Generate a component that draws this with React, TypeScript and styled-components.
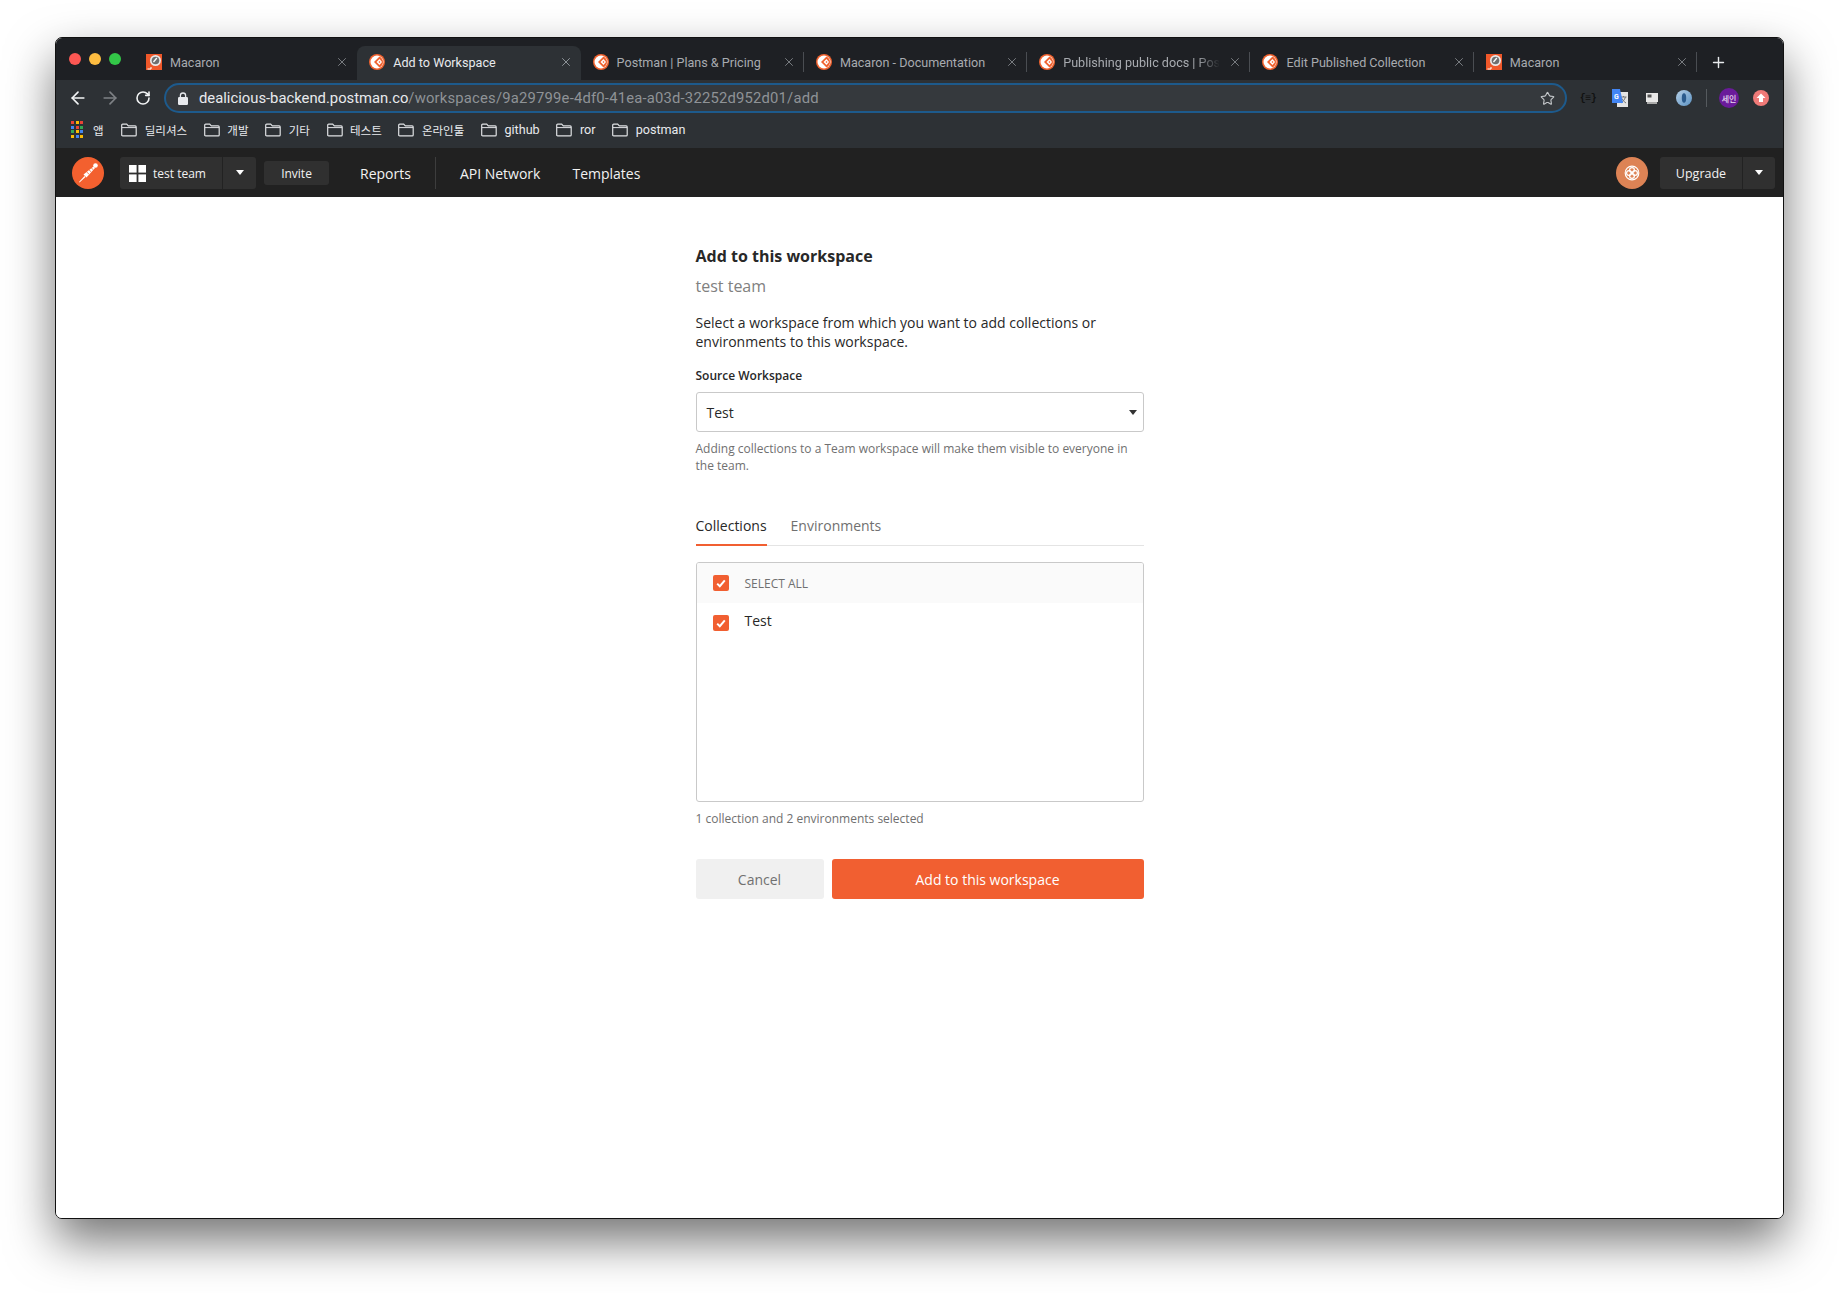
import * as React from "react";
import styled, { createGlobalStyle } from "styled-components";
import { ArrowLeft, ArrowRight, Plus, RotateCw, Star, X } from "lucide-react";

const GlobalStyle = createGlobalStyle`
  html, body {
    margin: 0;
    padding: 0;
    background: #fff;
  }
  * {
    box-sizing: border-box;
  }
`;

const tabs = [
  { title: "Macaron", icon: "square" },
  { title: "Add to Workspace", icon: "round", active: true },
  { title: "Postman | Plans & Pricing", icon: "round", divider: true },
  { title: "Macaron - Documentation", icon: "round", divider: true },
  { title: "Publishing public docs | Postman", icon: "round", divider: true, fade: true },
  { title: "Edit Published Collection", icon: "round", divider: true },
  { title: "Macaron", icon: "square", divider: true },
];

const bookmarks = [
  { name: "딜리셔스" },
  { name: "개발" },
  { name: "기타" },
  { name: "테스트" },
  { name: "온라인툴" },
  { name: "github", latin: true },
  { name: "ror", latin: true },
  { name: "postman", latin: true },
];

const appColors = [
  "#ea4335", "#fbbc04", "#ea4335",
  "#4285f4", "#ea4335", "#34a853",
  "#34a853", "#fbbc04", "#4285f4",
  "#fbbc04", "#4285f4", "#fbbc04",
];

function TabIcon({ kind }: { kind: string }) {
  if (kind === "square") {
    return (
      <svg width="16" height="16" viewBox="0 0 16 16">
        <rect width="16" height="16" fill="#f0582a" />
        <circle cx="9.500" cy="6.500" r="5.500" fill="#e8e8e8" />
        <circle cx="9.500" cy="6.500" r="3.800" fill="#6f6f6f" />
        <path d="M7.500 8 10.800 4" stroke="#fff" strokeWidth="1.300" />
        <path d="M1.500 15h3.500v-2" stroke="#fff" fill="none" />
      </svg>
    );
  }
  return (
    <svg width="16" height="16" viewBox="0 0 16 16">
      <circle cx="8" cy="8" r="8" fill="#f0622f" />
      <circle cx="8" cy="8" r="6.500" fill="#fff" />
      <path d="M10.500 2.500 5 8l5.500 5.500c2-1 3.500-3 3.500-5.500s-1.500-4.500-3.500-5.500Z" fill="#f0622f" />
      <path d="M10.500 5 7.500 8l3 3L13 8Z" fill="#fff" />
      <path d="M10.500 7 9.500 8l1 1 1-1Z" fill="#f0622f" />
    </svg>
  );
}

function FolderIcon() {
  return (
    <svg width="16" height="14" viewBox="0 0 16 14" fill="none">
      <path
        d="M.7 2.200c0-.6.4-1 1-1h4l1.600 1.700h6.900c.6 0 1 .4 1 1v8c0 .6-.4 1-1 1H1.700c-.6 0-1-.4-1-1Z"
        stroke="#dfe1e4"
        strokeWidth="1.200"
      />
      <path d="M1 4.600h14" stroke="#dfe1e4" strokeWidth="1" />
    </svg>
  );
}

function LockIcon() {
  return (
    <svg width="10" height="13" viewBox="0 0 10 13">
      <path d="M2.400 5.500V3.600a2.600 2.600 0 0 1 5.200 0v1.900" fill="none" stroke="#e8eaed" strokeWidth="1.300" />
      <rect y="5" width="10" height="8" rx="1.200" fill="#e8eaed" />
    </svg>
  );
}

function PostmanLogo() {
  return (
    <svg width="32" height="32" viewBox="0 0 32 32">
      <circle cx="16" cy="16" r="16" fill="#f3602f" />
      <circle cx="23.500" cy="8.500" r="2.300" fill="#fff" />
      <path d="M21.500 9.500 23 11 14.500 20.500 11.500 17.500Z" fill="#fff" />
      <path d="M14.500 14.800 17 17.200M16.800 12.600l2.500 2.400M19 10.600l2.300 2.200" stroke="#f3602f" strokeWidth=".8" />
      <path d="M12.500 19 13.500 20 7.500 25.500 7 25Z" fill="#fff" />
    </svg>
  );
}

function GridIcon() {
  return (
    <svg width="17" height="17" viewBox="0 0 17 17" fill="#fff">
      <rect width="7.600" height="7.600" />
      <rect x="9.400" width="7.600" height="7.600" />
      <rect y="9.400" width="7.600" height="7.600" />
      <rect x="9.400" y="9.400" width="7.600" height="7.600" />
    </svg>
  );
}

function Caret({ color }: { color: string }) {
  return (
    <svg width="8" height="5" viewBox="0 0 8 5">
      <path d="M0 0h8L4 5Z" fill={color} />
    </svg>
  );
}

function Check() {
  return (
    <CheckBox>
      <svg width="10" height="9" viewBox="0 0 10 9" fill="none">
        <path d="M1.200 4.600 3.800 7.200 8.800 1.400" stroke="#fff" strokeWidth="2" />
      </svg>
    </CheckBox>
  );
}

function TranslateIcon() {
  return (
    <svg width="16" height="18" viewBox="0 0 16 18">
      <rect x="5" y="3" width="11" height="15" fill="#e4e4e4" />
      <path d="M8.500 8h6M11.500 7v1M13.500 8c-1 3-3 5-4.500 6M10 9.500c.8 2 2.500 3.500 4 4.500" stroke="#777" fill="none" />
      <path d="M0 0h8l3 14H0Z" fill="#4285f4" />
      <text x="2" y="9.500" fontSize="7" fill="#fff" fontFamily="Roboto, sans-serif" fontWeight="700">
        G
      </text>
    </svg>
  );
}

function ScreenIcon() {
  return (
    <svg width="12" height="11" viewBox="0 0 12 11">
      <rect width="12" height="9" fill="#e8e8e8" />
      <rect x="1.500" y="1.500" width="4" height="3" fill="#555" />
      <rect x="1" y="9" width="10" height="2" fill="#aaa" />
    </svg>
  );
}

function RingIcon() {
  return (
    <svg width="16" height="16" viewBox="0 0 16 16" fill="none">
      <defs>
        <linearGradient id="ring" x1="0" y1="0" x2="1" y2="1">
          <stop offset="0" stopColor="#b5cfe6" />
          <stop offset="1" stopColor="#5c93c4" />
        </linearGradient>
      </defs>
      <circle cx="8" cy="8" r="8" fill="url(#ring)" />
      <ellipse cx="8" cy="8" rx="2.200" ry="4.800" fill="#2a5a8c" />
    </svg>
  );
}

function UploadIcon() {
  return (
    <svg width="16" height="16" viewBox="0 0 16 16">
      <circle cx="8" cy="8" r="8" fill="#ef7a78" />
      <path d="M8 3.500 12.500 8H10v4H6V8H3.500Z" fill="#fff" />
    </svg>
  );
}

function WheelIcon() {
  return (
    <svg width="16" height="16" viewBox="0 0 16 16" fill="none" stroke="#fff" strokeWidth="1.200">
      <circle cx="8" cy="8" r="6.800" />
      <circle cx="8" cy="5" r="2.400" />
      <circle cx="8" cy="11" r="2.400" />
      <circle cx="5" cy="8" r="2.400" />
      <circle cx="11" cy="8" r="2.400" />
    </svg>
  );
}

export default function App() {
  return (
    <>
      <GlobalStyle />
      <Page>
        <BrowserWindow>
          <TabStrip>
            <Lights>
              <Light $color="#fc5753" />
              <Light $color="#fdbc40" />
              <Light $color="#33c748" />
            </Lights>
            {tabs.map((tab, i) => (
              <Tab key={i} $active={tab.active} $divider={tab.divider}>
                <TabIcon kind={tab.icon} />
                <TabTitle $active={tab.active} $fade={tab.fade}>
                  {tab.title}
                </TabTitle>
                <TabClose $active={tab.active}>
                  <X size={14} strokeWidth={1.500} />
                </TabClose>
              </Tab>
            ))}
            <NewTab>
              <Plus size={17} strokeWidth={2} />
            </NewTab>
          </TabStrip>

          <Toolbar>
            <NavButton $dim={false}>
              <ArrowLeft size={20} strokeWidth={2} />
            </NavButton>
            <NavButton $dim>
              <ArrowRight size={20} strokeWidth={2} />
            </NavButton>
            <NavButton $dim={false}>
              <RotateCw size={16} strokeWidth={2.400} />
            </NavButton>
            <Omnibox>
              <LockIcon />
              <Url>
                <UrlHost>dealicious-backend.postman.co</UrlHost>
                /workspaces/9a29799e-4df0-41ea-a03d-32252d952d01/add
              </Url>
              <Star size={15} strokeWidth={1.800} color="#c4c7ca" />
            </Omnibox>
            <Extensions>
              <ExtensionBraces>{"{≡}"}</ExtensionBraces>
              <ExtensionSlot>
                <TranslateIcon />
              </ExtensionSlot>
              <ExtensionSlot>
                <ScreenIcon />
              </ExtensionSlot>
              <ExtensionSlot>
                <RingIcon />
              </ExtensionSlot>
              <ToolbarDivider />
              <ExtensionSlot>
                <ProfileBadge>세인</ProfileBadge>
              </ExtensionSlot>
              <ExtensionSlot>
                <UploadIcon />
              </ExtensionSlot>
            </Extensions>
          </Toolbar>

          <BookmarkBar>
            <AppsItem>
              <AppsGrid>
                {appColors.map((c, i) => (
                  <AppDot key={i} $color={c} />
                ))}
              </AppsGrid>
              <BookmarkName>앱</BookmarkName>
            </AppsItem>
            {bookmarks.map((b) => (
              <Bookmark key={b.name}>
                <FolderIcon />
                <BookmarkName $latin={b.latin}>{b.name}</BookmarkName>
              </Bookmark>
            ))}
          </BookmarkBar>

          <AppBar>
            <PostmanLogo />
            <TeamButton>
              <TeamName>
                <GridIcon />
                test team
              </TeamName>
              <TeamCaret>
                <Caret color="#fff" />
              </TeamCaret>
            </TeamButton>
            <InviteButton>Invite</InviteButton>
            <AppLink>Reports</AppLink>
            <AppDivider />
            <AppLink>API Network</AppLink>
            <AppLink>Templates</AppLink>
            <AppBarRight>
              <UserAvatar>
                <WheelIcon />
              </UserAvatar>
              <UpgradeButton>
                <UpgradeLabel>Upgrade</UpgradeLabel>
                <UpgradeCaret>
                  <Caret color="#fff" />
                </UpgradeCaret>
              </UpgradeButton>
            </AppBarRight>
          </AppBar>

          <Body>
            <Form>
              <Title>Add to this workspace</Title>
              <TeamLabel>test team</TeamLabel>
              <Description>
                Select a workspace from which you want to add collections or environments to this
                workspace.
              </Description>
              <FieldLabel>Source Workspace</FieldLabel>
              <SelectBox>
                Test
                <Caret color="#333" />
              </SelectBox>
              <HelpText>
                Adding collections to a Team workspace will make them visible to everyone in the
                team.
              </HelpText>
              <TabRow>
                <FormTab $active>Collections</FormTab>
                <FormTab>Environments</FormTab>
              </TabRow>
              <ListBox>
                <SelectAllRow>
                  <Check />
                  SELECT ALL
                </SelectAllRow>
                <ListRow>
                  <Check />
                  <ListRowLabel>Test</ListRowLabel>
                </ListRow>
              </ListBox>
              <SelectionCount>1 collection and 2 environments selected</SelectionCount>
              <Actions>
                <CancelButton>Cancel</CancelButton>
                <SubmitButton>Add to this workspace</SubmitButton>
              </Actions>
            </Form>
          </Body>
        </BrowserWindow>
      </Page>
    </>
  );
}

const Page = styled.div`
  width: 1839px;
  height: 1293px;
  padding: 37px 55px 74px 55px;
  background: #fff;
  overflow: hidden;
`;

const BrowserWindow = styled.div`
  display: flex;
  flex-direction: column;
  height: 100%;
  border: 1px solid #111;
  border-radius: 7px;
  overflow: hidden;
  background: #fff;
  box-shadow: 0 22px 48px 0 rgba(0, 0, 0, 0.55);
`;

const TabStrip = styled.div`
  display: flex;
  align-items: flex-end;
  height: 42px;
  flex-shrink: 0;
  background: #1e2024;
`;

const Lights = styled.div`
  display: flex;
  align-self: flex-start;
  gap: 8px;
  width: 78px;
  padding: 15px 0 0 13px;
`;

const Light = styled.span<{ $color: string }>`
  width: 12px;
  height: 12px;
  border-radius: 50%;
  background: ${(p) => p.$color};
`;

const Tab = styled.div<{ $active?: boolean; $divider?: boolean }>`
  position: relative;
  display: flex;
  align-items: center;
  width: 223.300px;
  height: 34px;
  padding: 0 8px 2px 12px;
  border-radius: 8px 8px 0 0;
  background: ${(p) => (p.$active ? "#2d3135" : "transparent")};

  ${(p) =>
    p.$divider &&
    `
    &::after {
      content: "";
      position: absolute;
      right: 0;
      top: 6px;
      height: 20px;
      width: 1px;
      background: #4a4d52;
    }
  `}
`;

const TabTitle = styled.span<{ $active?: boolean; $fade?: boolean }>`
  flex: 1;
  min-width: 0;
  margin-left: 8px;
  overflow: hidden;
  white-space: nowrap;
  font: 400 12.600px Roboto, sans-serif;
  color: ${(p) => (p.$active ? "#e8eaed" : "#a8abb0")};
  ${(p) =>
    p.$fade &&
    `
    -webkit-mask-image: linear-gradient(90deg, #000 85%, transparent 100%);
    mask-image: linear-gradient(90deg, #000 85%, transparent 100%);
  `}
`;

const TabClose = styled.span<{ $active?: boolean }>`
  display: flex;
  margin-left: 8px;
  color: ${(p) => (p.$active ? "#9aa0a6" : "#85888d")};
`;

const NewTab = styled.span`
  display: flex;
  align-items: center;
  height: 34px;
  margin-left: 13px;
  padding-bottom: 2px;
  color: #e8eaed;
`;

const Toolbar = styled.div`
  display: flex;
  align-items: center;
  height: 36px;
  flex-shrink: 0;
  padding: 0 6px 0 5.500px;
  background: #2d3135;
`;

const NavButton = styled.span<{ $dim: boolean }>`
  display: flex;
  flex: none;
  justify-content: center;
  width: 32.500px;
  color: ${(p) => (p.$dim ? "#7e8185" : "#f1f3f4")};
`;

const Omnibox = styled.div`
  display: flex;
  align-items: center;
  flex: none;
  width: 1403px;
  height: 30px;
  margin-left: 5px;
  padding: 0 10px 0 12px;
  border: 2px solid #1d5a8c;
  border-radius: 15px;
  background: #35393d;
`;

const Url = styled.span`
  flex: 1;
  margin-left: 11px;
  white-space: nowrap;
  font: 400 14.800px Roboto, sans-serif;
  letter-spacing: 0.200px;
  color: #8f9397;
`;

const UrlHost = styled.span`
  color: #e8eaed;
  letter-spacing: 0;
`;

const Extensions = styled.div`
  display: flex;
  flex: none;
  align-items: center;
  margin-left: 5px;
`;

const ExtensionSlot = styled.span`
  display: flex;
  flex: none;
  align-items: center;
  justify-content: center;
  width: 32px;
`;

const ExtensionBraces = styled(ExtensionSlot)`
  font: 700 10px "Liberation Mono", monospace;
  color: #111;
  letter-spacing: -0.500px;
`;

const ToolbarDivider = styled.span`
  width: 1px;
  height: 18px;
  margin: 0 6px 0 6px;
  background: #555a5e;
`;

const ProfileBadge = styled.span`
  display: flex;
  align-items: center;
  justify-content: center;
  width: 20px;
  height: 20px;
  border-radius: 50%;
  background: #6a1b9a;
  color: #e6d7ee;
  font: 500 8px "Noto Sans CJK KR", sans-serif;
`;

const BookmarkBar = styled.div`
  display: flex;
  align-items: center;
  gap: 16.700px;
  height: 32px;
  flex-shrink: 0;
  padding: 0 0 5px 15px;
  background: #2d3135;
  color: #e8eaed;
`;

const Bookmark = styled.span`
  display: flex;
  align-items: center;
  gap: 7.500px;
`;

const BookmarkName = styled.span<{ $latin?: boolean }>`
  font: 400 ${(p) => (p.$latin ? "12.600px" : "11.500px")} Roboto, "Noto Sans CJK KR", sans-serif;
`;

const AppsItem = styled(Bookmark)`
  gap: 10px;
  margin-right: 1px;
`;

const AppsGrid = styled.span`
  display: grid;
  grid-template-columns: repeat(3, 3px);
  grid-auto-rows: 3px;
  gap: 1.500px;
`;

const AppDot = styled.i<{ $color: string }>`
  background: ${(p) => p.$color};
`;

const AppBar = styled.div`
  display: flex;
  align-items: center;
  height: 49px;
  flex-shrink: 0;
  padding: 0 8px 0 16px;
  background: #212121;
  font-family: "Open Sans", sans-serif;
`;

const TeamButton = styled.div`
  display: flex;
  height: 32px;
  margin-left: 16px;
  border-radius: 3px;
  background: #303030;
  color: #f2f2f2;
  font-size: 12px;
`;

const TeamName = styled.div`
  display: flex;
  align-items: center;
  gap: 7px;
  width: 103px;
  padding: 1px 0 0 9px;
  border-right: 1px solid #222;
`;

const TeamCaret = styled.div`
  display: flex;
  align-items: center;
  justify-content: center;
  width: 33px;
`;

const InviteButton = styled.div`
  display: flex;
  align-items: center;
  justify-content: center;
  width: 65px;
  height: 24px;
  margin-left: 8px;
  padding-top: 1px;
  border-radius: 3px;
  background: #303030;
  color: #f2f2f2;
  font-size: 12px;
`;

const AppLink = styled.span`
  margin-left: 31px;
  padding-top: 1px;
  color: #f2f2f2;
  font-size: 14px;
  font-weight: 500;
  white-space: nowrap;

  & + & {
    margin-left: 32px;
  }
`;

const AppDivider = styled.span`
  width: 1px;
  height: 32px;
  margin: 0 -7px 0 24px;
  background: #3d3d3d;
`;

const AppBarRight = styled.div`
  display: flex;
  align-items: center;
  margin-left: auto;
`;

const UserAvatar = styled.div`
  display: flex;
  align-items: center;
  justify-content: center;
  width: 32px;
  height: 32px;
  border-radius: 50%;
  background: #dd8355;
`;

const UpgradeButton = styled.div`
  display: flex;
  height: 32px;
  margin-left: 12px;
  border-radius: 3px;
  background: #303030;
  color: #f2f2f2;
  font-size: 12.500px;
  font-weight: 500;
`;

const UpgradeLabel = styled.div`
  display: flex;
  align-items: center;
  justify-content: center;
  width: 83px;
  padding-top: 1px;
  border-right: 1px solid #222;
`;

const UpgradeCaret = styled.div`
  display: flex;
  align-items: center;
  justify-content: center;
  width: 32px;
`;

const Body = styled.div`
  flex: 1;
  display: flex;
  justify-content: center;
  padding-top: 47px;
  background: #fff;
`;

const Form = styled.div`
  width: 448px;
  font-family: "Open Sans", sans-serif;
`;

const Title = styled.h1`
  margin: 0;
  font-size: 16px;
  line-height: 24px;
  font-weight: 700;
  color: #282828;
`;

const TeamLabel = styled.div`
  margin-top: 6px;
  font-size: 16px;
  line-height: 24px;
  color: #808080;
`;

const Description = styled.p`
  margin: 15px 0 0;
  font-size: 14px;
  line-height: 19px;
  color: #282828;
`;

const FieldLabel = styled.div`
  margin-top: 16px;
  font-size: 12px;
  line-height: 18px;
  font-weight: 600;
  color: #282828;
`;

const SelectBox = styled.div`
  display: flex;
  align-items: center;
  justify-content: space-between;
  height: 40px;
  margin-top: 7px;
  padding: 0 6px 0 10px;
  border: 1px solid #c9c9c9;
  border-radius: 3px;
  font-size: 14px;
  color: #282828;
`;

const HelpText = styled.div`
  margin-top: 8px;
  font-size: 12px;
  line-height: 17px;
  color: #707070;
`;

const TabRow = styled.div`
  display: flex;
  gap: 24px;
  margin-top: 36px;
  border-bottom: 1px solid #e4e4e4;
`;

const FormTab = styled.div<{ $active?: boolean }>`
  height: 36px;
  margin-bottom: -1px;
  padding-top: 6px;
  font-size: 14px;
  line-height: 20px;
  color: ${(p) => (p.$active ? "#282828" : "#707070")};
  border-bottom: 2px solid ${(p) => (p.$active ? "#f15f31" : "transparent")};
`;

const ListBox = styled.div`
  height: 240px;
  margin-top: 16px;
  border: 1px solid #c9c9c9;
  border-radius: 3px;
  overflow: hidden;
`;

const CheckBox = styled.span`
  display: flex;
  align-items: center;
  justify-content: center;
  width: 16px;
  height: 16px;
  flex-shrink: 0;
  border-radius: 2px;
  background: #f15f31;
`;

const SelectAllRow = styled.div`
  display: flex;
  align-items: center;
  gap: 16px;
  height: 40px;
  padding-left: 16px;
  background: #fafafa;
  font-size: 12px;
  color: #707070;
`;

const ListRow = styled.div`
  display: flex;
  align-items: flex-start;
  gap: 16px;
  padding: 12px 0 0 16px;
  font-size: 14px;
  color: #282828;
`;

const ListRowLabel = styled.span`
  line-height: 16px;
  margin-top: -2px;
`;

const SelectionCount = styled.div`
  margin-top: 8px;
  font-size: 12px;
  line-height: 17px;
  color: #707070;
`;

const Actions = styled.div`
  display: flex;
  gap: 8px;
  margin-top: 32px;
`;

const CancelButton = styled.div`
  display: flex;
  align-items: center;
  justify-content: center;
  width: 128px;
  height: 40px;
  border-radius: 3px;
  background: #f0f0f0;
  font-size: 14px;
  color: #707070;
`;

const SubmitButton = styled.div`
  flex: 1;
  display: flex;
  align-items: center;
  justify-content: center;
  height: 40px;
  border-radius: 3px;
  background: #f15f31;
  font-size: 14px;
  font-weight: 500;
  color: #fff;
`;
